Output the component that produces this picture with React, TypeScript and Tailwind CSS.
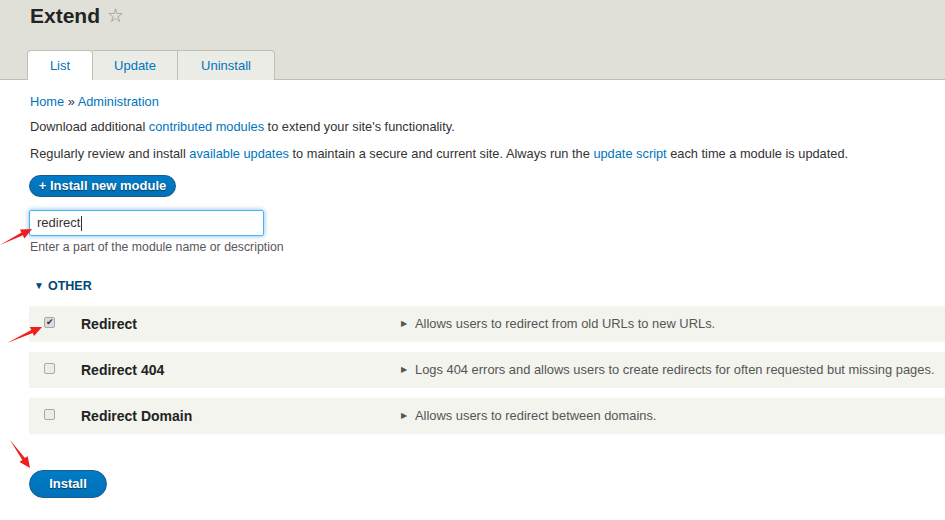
import React from "react";

interface ModuleRowProps {
    name: string
    description: string
    checked?: boolean
}

function ModuleRow({ name, description, checked }: ModuleRowProps) {
    return (
        <div className="flex items-center h-[36px] bg-[#f3f4ee]">
            <div className="w-[52px] pl-[15px] flex">
                <span className={"w-[11px] h-[11px] mb-[3px] rounded-[2px] border border-[#a9a9a9] flex items-center justify-center text-[9px] leading-none text-[#333] " + (checked ? "bg-[#dcdcdc]" : "bg-[#ececec]")}>
                    {checked ? "✔" : ""}
                </span>
            </div>
            <span className="w-[319px] font-bold text-[14px] text-[#222]">{name}</span>
            <span className="text-[12.9px] text-[#555] flex items-center gap-[8px]">
                <span className="ml-[1px] text-[8px] text-[#555]">▶</span>
                {description}
            </span>
        </div>
    )
}

function Arrow({ x1, y1, x2, y2 }: { x1: number, y1: number, x2: number, y2: number }) {
    const dx = x2 - x1
    const dy = y2 - y1
    const len = Math.sqrt(dx * dx + dy * dy)
    const ux = dx / len
    const uy = dy / len
    const nx = -uy
    const ny = ux
    const hb = 11
    const bx = x2 - ux * hb
    const by = y2 - uy * hb
    const pts = [
        [x1, y1],
        [bx + nx * 1.6, by + ny * 1.6],
        [bx + nx * 5, by + ny * 5],
        [x2, y2],
        [bx - nx * 5, by - ny * 5],
        [bx - nx * 1.6, by - ny * 1.6],
    ].map(p => p.join(",")).join(" ")
    return <polygon points={pts} fill="#f21d1d" />
}

export default function App() {
    return (
        <div className="relative w-[945px] h-[520px] overflow-hidden bg-white font-['Liberation_Sans',Arial,sans-serif]">
            {/* Header */}
            <header className="h-[80px] bg-[#e0e0d8] border-b border-[#bfbfba] flex flex-col">
                <div className="flex items-center gap-[7px] pl-[30px] pt-[4px]">
                    <h1 className="text-[21px] font-bold text-[#232323] leading-[24px]">Extend</h1>
                    <span className="text-[19px] text-[#8a8a84] leading-[24px]">☆</span>
                </div>
                <nav className="flex mt-auto pl-[27px] -mb-[1px]">
                    <span className="w-[66px] h-[30px] flex items-center justify-center bg-white border border-b-0 border-[#bfbfba] rounded-t-[4px] text-[13px] text-[#0074bd]">List</span>
                    <span className="w-[85px] h-[30px] flex items-center justify-center bg-[#ecece7] border-t border-r border-[#bfbfba] text-[13px] text-[#0074bd]">Update</span>
                    <span className="w-[97px] h-[30px] flex items-center justify-center bg-[#ecece7] border-t border-r border-[#bfbfba] rounded-tr-[4px] text-[13px] text-[#0074bd]">Uninstall</span>
                </nav>
            </header>

            {/* Content */}
            <main className="pl-[29px] pt-[14px] text-[12.8px] text-[#333]">
                <div className="leading-[16px] pl-[1px]">
                    <a className="text-[#0074bd]">Home</a> » <a className="text-[#0074bd]">Administration</a>
                </div>
                <p className="leading-[16px] mt-[9px] pl-[1px]">
                    Download additional <a className="text-[#0074bd]">contributed modules</a> to extend your site's functionality.
                </p>
                <p className="leading-[16px] mt-[11px] pl-[1px]">
                    Regularly review and install <a className="text-[#0074bd]">available updates</a> to maintain a secure and current site. Always run the <a className="text-[#0074bd]">update script</a> each time a module is updated.
                </p>
                <button className="mt-[13px] h-[22px] w-[147px] rounded-full bg-gradient-to-b from-[#007bc6] to-[#0071b8] border border-[#1e5c90] text-white font-bold text-[13px] [text-shadow:0_1px_1px_rgba(0,0,0,0.5)] flex items-center justify-center">
                    + Install new module
                </button>
                <div className="mt-[13px] w-[235px] h-[26px] border border-[#40b6ff] rounded-[2px] shadow-[0_0_5px_rgba(0,116,189,0.5)] flex items-center pl-[7px] text-[13px] text-[#333]">
                    redirect<span className="w-px h-[15px] bg-[#333] ml-[1px]" />
                </div>
                <div className="mt-[4px] text-[12.3px] leading-[14px] text-[#5c5560] pl-[1px]">Enter a part of the module name or description</div>

                <div className="mt-[24px] flex items-center gap-[4px] pl-[5px] text-[12.5px] font-bold text-[#004875] leading-[16px]">
                    <span className="text-[10px]">▼</span>OTHER
                </div>

                <div className="mt-[12px] flex flex-col gap-[10px]">
                    <ModuleRow name="Redirect" description="Allows users to redirect from old URLs to new URLs." checked />
                    <ModuleRow name="Redirect 404" description="Logs 404 errors and allows users to create redirects for often requested but missing pages." />
                    <ModuleRow name="Redirect Domain" description="Allows users to redirect between domains." />
                </div>

                <button className="mt-[36px] h-[28px] w-[78px] rounded-full bg-gradient-to-b from-[#007bc6] to-[#0071b8] border border-[#1e5c90] text-white font-bold text-[13px] [text-shadow:0_1px_1px_rgba(0,0,0,0.5)] flex items-center justify-center">
                    Install
                </button>
            </main>

            {/* Annotation arrows */}
            <svg className="absolute inset-0 pointer-events-none" width="945" height="520">
                <Arrow x1={0} y1={245} x2={32} y2={229} />
                <Arrow x1={7} y1={343} x2={42} y2={327} />
                <Arrow x1={10} y1={440} x2={30} y2={468} />
            </svg>
        </div>
    )
}
